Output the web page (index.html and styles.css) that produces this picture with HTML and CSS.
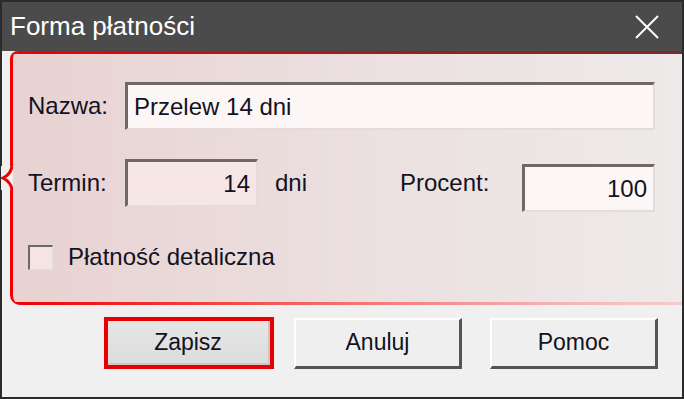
FILE: index.html
```html
<!DOCTYPE html>
<html lang="pl">

<head>
    <meta charset="UTF-8">
    <meta name="viewport" content="width=device-width, initial-scale=1.0">
    <title>Forma płatności</title>
    <link rel="stylesheet" href="styles.css">
</head>

<body>
    <div class="window">
        <div class="titlebar">
            <span class="title">Forma płatności</span>
            <svg class="close" width="26" height="26" viewBox="0 0 26 26">
                <path d="M2 2 L24 24 M24 2 L2 24" stroke="#fff" stroke-width="2" fill="none" />
            </svg>
        </div>

        <div class="group">
            <svg class="brace" width="12" height="24" viewBox="0 0 12 24">
                <path d="M11 0 Q10 8 2 12 Q10 16 11 24" stroke="#f00000" stroke-width="3" fill="none" />
            </svg>
            <div class="row">
                <label class="label">Nazwa:</label>
                <div class="field wide">Przelew 14 dni</div>
            </div>
            <div class="row">
                <label class="label">Termin:</label>
                <div class="field short num pink">14</div>
                <span class="unit">dni</span>
                <label class="label-right">Procent:</label>
                <div class="field short num shift">100</div>
            </div>
            <div class="row check-row">
                <span class="checkbox"></span>
                <span class="check-label">Płatność detaliczna</span>
            </div>
        </div>

        <div class="buttons">
            <div class="focus">
                <button class="btn">Zapisz</button>
            </div>
            <button class="btn">Anuluj</button>
            <button class="btn">Pomoc</button>
        </div>
    </div>
</body>

</html>
```

FILE: styles.css
```css
body {
    margin: 0;
    font-family: "Liberation Sans", Arial, sans-serif;
    color: #121222;
}

.window {
    width: 684px;
    height: 399px;
    box-sizing: border-box;
    border: 2px solid #2b2b2b;
    background-color: #f0f0f0;
    display: flex;
    flex-direction: column;
}

.titlebar {
    height: 49px;
    background-color: #4b4b4b;
    display: flex;
    align-items: center;
    justify-content: space-between;
    padding: 0 22px 0 8px;
    flex-shrink: 0;
}

.title {
    color: #fff;
    font-size: 26px;
}

.group {
    position: relative;
    margin-left: 8px;
    height: 254px;
    box-sizing: border-box;
    border-left: 3px solid #f00000;
    border-radius: 8px 0 0 10px;
    padding: 31px 26px 0 15px;
    background:
        linear-gradient(to right, #f00000, #b01818 40%, #7a2a2a) top / 100% 3px no-repeat,
        linear-gradient(to right, #f00000, #f45a5a 40%, #f7b0b0 80%, #f4cccc) bottom / 100% 3px no-repeat,
        linear-gradient(to right, #e8d2d2, #ecdfdf 50%, #eeeaea);
}

.brace {
    position: absolute;
    left: -12px;
    top: 115px;
    background-color: #f0f0f0;
}

.row {
    display: flex;
    align-items: center;
    margin-bottom: 24px;
}

.label {
    width: 97px;
    font-size: 24px;
}

.label-right {
    width: 122px;
    font-size: 24px;
}

.field {
    height: 48px;
    box-sizing: border-box;
    border-top: 3px solid #6e6868;
    border-left: 3px solid #6e6868;
    border-right: 2px solid #e4dcdc;
    border-bottom: 2px solid #e4dcdc;
    background-color: #fcf7f6;
    font-size: 24px;
    display: flex;
    align-items: center;
    padding: 0 6px;
}

.wide {
    width: 530px;
}

.short {
    width: 133px;
}

.num {
    justify-content: flex-end;
}

.pink {
    background-color: #f6e6e5;
}

.shift {
    margin-top: 10px;
}

.unit {
    width: 142px;
    padding-left: 17px;
    box-sizing: border-box;
    font-size: 24px;
}

.check-row {
    margin-top: 31px;
}

.checkbox {
    width: 25px;
    height: 25px;
    box-sizing: border-box;
    border-top: 2px solid #6e6868;
    border-left: 2px solid #6e6868;
    border-right: 1px solid #e4dcdc;
    border-bottom: 1px solid #e4dcdc;
    background-color: #f4e4e4;
    margin-right: 15px;
}

.check-label {
    font-size: 24px;
}

.buttons {
    display: flex;
    align-items: center;
    padding: 12px 0 0 102px;
    gap: 20px;
}

.focus {
    border: 4px solid #e80000;
    width: 170px;
    height: 52px;
    box-sizing: border-box;
    display: flex;
}

.focus .btn {
    width: 100%;
    height: 100%;
    border: none;
    border-right: 2px solid #c8c8c8;
    border-bottom: 2px solid #c8c8c8;
    background: linear-gradient(to bottom, #e6e6e6, #dcdcdc);
}

.btn {
    width: 168px;
    height: 51px;
    font-family: "Liberation Sans", Arial, sans-serif;
    font-size: 23px;
    color: #121222;
    background-color: #efefef;
    border-top: 2px solid #fff;
    border-left: 2px solid #fff;
    border-right: 3px solid #555;
    border-bottom: 3px solid #555;
    padding: 0;
}

.btn + .btn {
    margin-left: 8px;
}
```
